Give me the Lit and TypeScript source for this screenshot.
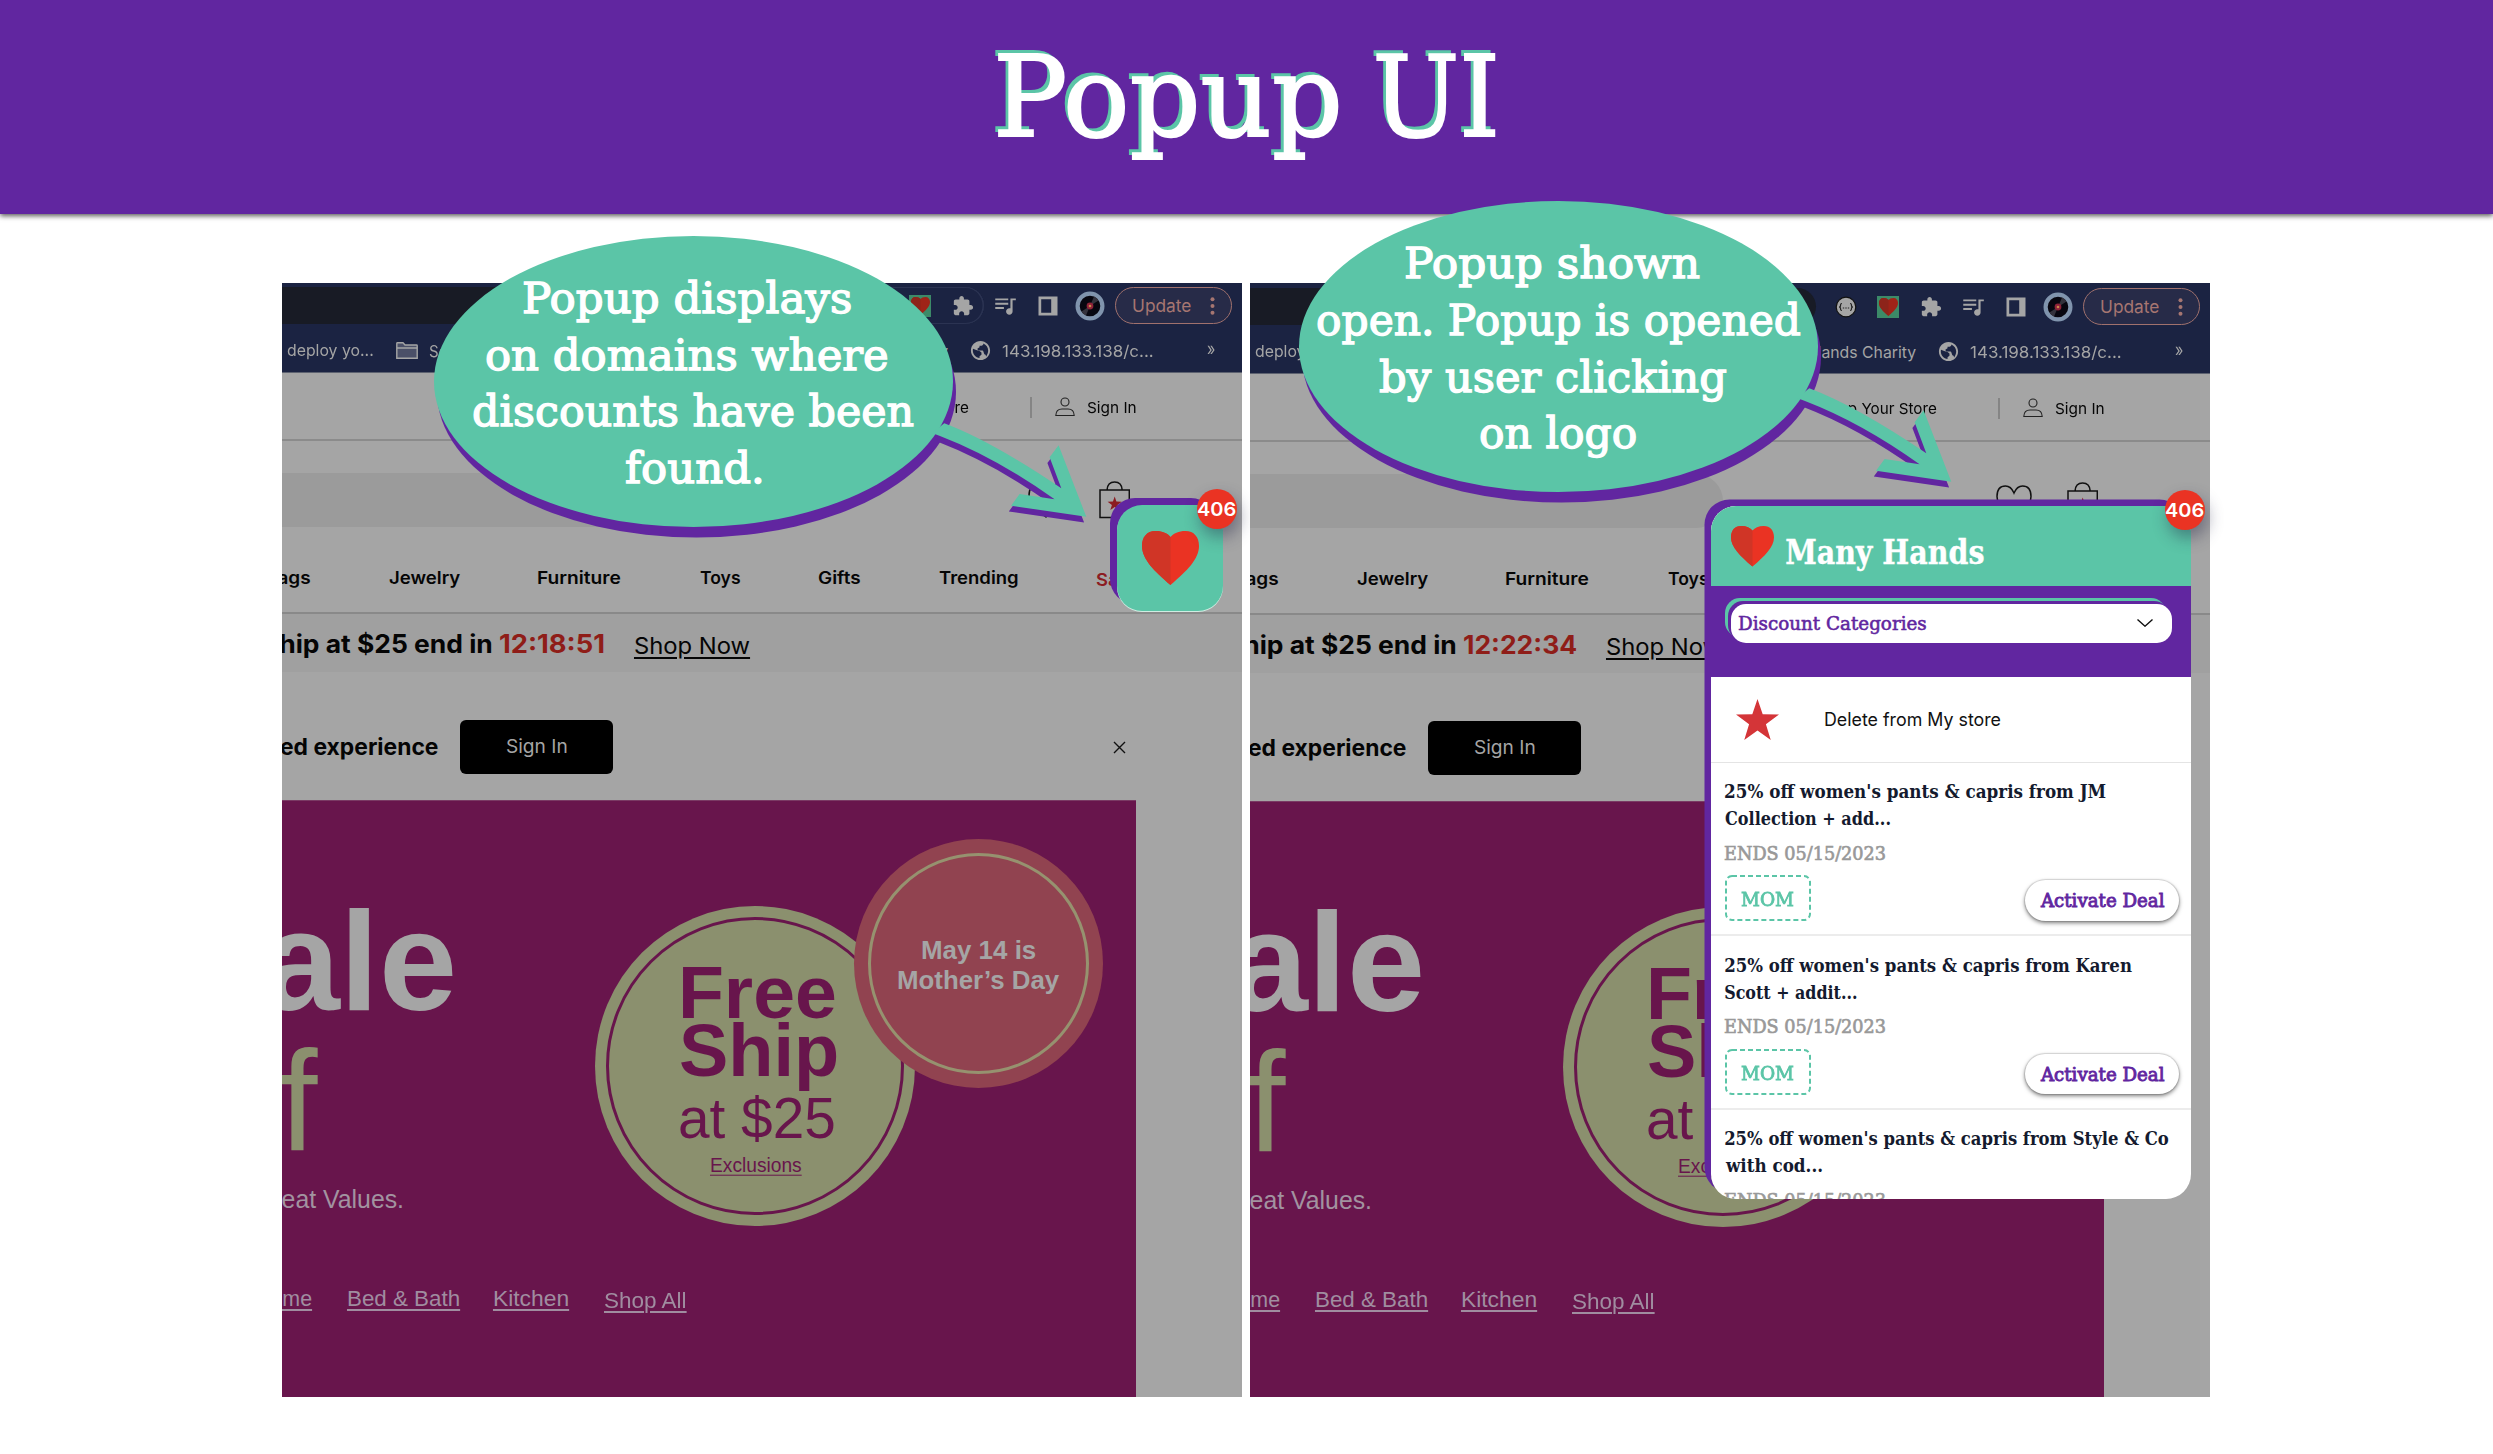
import { LitElement, html, css } from "lit";
import { customElement, property } from "lit/decorators.js";
import { classMap } from "lit/directives/class-map.js";
import { styleMap } from "lit/directives/style-map.js";

const FACES: Record<string, string> = {
  slab: '"Roboto Slab", "DejaVu Serif", serif',
  ui: 'Inter, "Liberation Sans", sans-serif',
  sans: '"Liberation Sans", Arial, sans-serif',
};

const pen = document.createElement("canvas").getContext("2d")!;

/** A single line of text sized by cap height and ink width; its box runs from cap line to baseline. */
@customElement("fit-text")
class FitText extends LitElement {
  @property() text = "";
  @property() face = "ui";
  @property({ type: Number }) cap = 12;
  @property({ type: Number }) w = 0;
  @property({ type: Number }) weight = 400;
  @property({ type: Boolean }) underline = false;

  static styles = css`
    :host { display: inline-block; flex: none; }
    .box { display: block; }
    .run { display: block; width: max-content; white-space: pre; transform-origin: 0 0; }
    .under { text-decoration: underline; text-decoration-thickness: 0.07em; text-underline-offset: 0.14em; }
  `;

  render() {
    const family = FACES[this.face];
    pen.font = `${this.weight} 200px ${family}`;
    const size = (this.cap / pen.measureText("H").actualBoundingBoxAscent) * 200;
    pen.font = `${this.weight} ${size}px ${family}`;
    const m = pen.measureText(this.text);
    const ink = m.actualBoundingBoxLeft + m.actualBoundingBoxRight;
    const sx = this.w ? this.w / ink : 1;
    const asc = Math.round(m.fontBoundingBoxAscent);
    const desc = Math.round(m.fontBoundingBoxDescent);
    const dy = this.cap / 2 - (asc - desc) / 2;
    const dx = m.actualBoundingBoxLeft * sx;
    return html`<span class="box" style=${styleMap({ width: `${this.w || ink}px`, height: `${this.cap}px` })}
      ><span
        class=${classMap({ run: true, under: this.underline })}
        style=${styleMap({
          font: `${this.weight} ${size}px/${this.cap}px ${family}`,
          transform: `translate(${dx}px, ${dy}px) scaleX(${sx})`,
        })}
        >${this.text}</span
      ></span
    >`;
  }
}

const t = (text: string, face: string, cap: number, w: number, weight = 400, underline = false) =>
  html`<fit-text .text=${text} .face=${face} .cap=${cap} .w=${w} .weight=${weight} .underline=${underline}></fit-text>`;

const heart = (cls: string) => html`<svg class=${cls} viewBox="0 0 57 54" preserveAspectRatio="none">
  <path fill="#ea3323" d="M28.500 54C12 40 0 28 0 15 0 6 5 0 13.500 0 20.500 0 25.500 2.500 28.500 6 31.500 2.500 36.500 0 43.500 0 52 0 57 6 57 15 57 28 45 40 28.500 54Z" />
  <path fill="#d03526" d="M28.500 54C12 40 0 28 0 15 0 6 5 0 13.500 0 20.500 0 25.500 2.500 28.500 6Z" />
</svg>`;

const STAR = "M12 0 14.900 8.600 24 8.700 16.700 14.200 19.400 23 12 17.700 4.600 23 7.300 14.200 0 8.700 9.100 8.600Z";

@customElement("count-badge")
class CountBadge extends LitElement {
  @property({ type: Number }) count = 0;
  static styles = css`
    :host {
      display: flex; align-items: center; justify-content: center;
      width: 40px; height: 40px; border-radius: 50%;
      background: #ea3323; color: #fff; box-shadow: 3px 8px 16px rgba(35, 35, 70, 0.42);
    }
  `;
  render() {
    return t(String(this.count), "ui", 14, 38, 600);
  }
}

@customElement("speech-callout")
class SpeechCallout extends LitElement {
  @property({ attribute: false }) lines: { text: string; w: number; trail?: boolean }[] = [];
  static styles = css`
    :host {
      display: flex; flex-direction: column; align-items: center; gap: 24.700px;
      box-sizing: border-box; width: 519px; height: 291px; padding-top: 45px;
      border-radius: 50%; background: #5bc5a7; color: #fff; box-shadow: 3px 10.500px 0 #6126a0;
      -webkit-text-stroke: 1.400px #fff;
    }
    .trail { margin-right: 12px; }
    .line { display: flex; }
    .arrow { position: absolute; left: 0; top: 0; width: 519px; height: 291px; overflow: visible; }
  `;
  render() {
    return html`
      <svg class="arrow" viewBox="0 0 519 291">
        <path fill="#6126a0" transform="translate(-2.200 5.800)" d="M506 193Q557 204.800 627.300 252.300L615.600 221.300 624.600 209.300 652.300 280.800 577 269.700 585.600 258 620.600 263.300Q562 221.500 506 200Z" />
        <path fill="#5bc5a7" d="M510.300 187.300Q557 204.800 627.300 252.300L615.600 221.300 624.600 209.300 652.300 280.800 577 269.700 585.600 258 620.600 263.300Q562 221.500 506 200L498 197Z" />
      </svg>
      ${this.lines.map(
        (l) => html`<div class=${classMap({ line: true, trail: !!l.trail })}>${t(l.text, "slab", 32, l.w, 400)}</div>`
      )}
    `;
  }
}

@customElement("shop-page")
class ShopPage extends LitElement {
  @property() timer = "";
  @property({ type: Number }) timerWidth = 104;
  @property({ type: Number }) shipEnd = 210;
  @property({ type: Boolean }) grouped = false;
  @property({ type: Boolean }) lowered = false;

  static styles = css`
    :host { display: flex; flex-direction: column; width: 960px; height: 1114px; overflow: hidden; background: #a5a5a5; color: #050505; }
    .toolbar { display: flex; flex: none; height: 37px; padding: 4px 10.300px 0 0; background: #1b2342; color: #a5a5a5; }
    .lowered { padding-top: 5px; }
    .address { width: 566px; flex: none; background: #181b25; border-radius: 0 18.500px 18.500px 0; }
    .exts { display: flex; box-sizing: border-box; margin-left: 8.500px; }
    .grouped { border-radius: 18.500px; box-shadow: inset -1.500px 0 0 #2b3352, inset 0 -1px 0 #2b3352, inset 0 1px 0 #2b3352; }
    .cell { display: flex; width: 42.500px; align-items: center; justify-content: center; }
    .update {
      display: flex; box-sizing: border-box; width: 117px; margin-left: 3.300px; padding: 0 16px 0 17px; align-items: center; justify-content: space-between;
      border: 1.500px solid #a0716d; border-radius: 19px; background: #272b48; color: #a67671;
    }
    .fav { display: flex; width: 22px; height: 22px; align-items: center; justify-content: center; background: #3c8a68; }
    .favheart { width: 19px; height: 18px; filter: brightness(0.680); }
    .i22 { width: 22px; height: 22px; }
    .i26 { width: 26px; height: 26px; }
    .i29 { width: 30px; height: 30px; }
    .bookmarks { display: flex; flex: none; box-sizing: border-box; height: 49px; align-items: center; padding-top: 5px; background: #1b2342; border-bottom: 1.500px solid #5d6270; color: #a5a5a5; }
    .cutmark { margin-left: -14px; }
    .folder { width: 22px; height: 17px; margin: 0 11px 0 22.500px; flex: none; }
    .spring { flex: 1; }
    .globe { width: 23px; height: 23px; margin: 0 10px 0 21px; }
    .more { margin: 0 27px 1px 54px; }
    .utility { display: flex; flex: none; box-sizing: border-box; height: 68px; align-items: center; padding: 2px 106.700px 0 0; justify-content: flex-end; border-bottom: 2px solid #8b8b8b; }
    .rule { width: 2px; height: 21px; margin: 0 22.500px 0 61px; background: #858585; }
    .user { width: 20px; height: 20px; margin-right: 12px; }
    .search { display: flex; flex: none; height: 93px; }
    .field { width: 472.700px; height: 54px; margin-top: 32px; background: #9b9b9b; border-radius: 0 27px 27px 0; }
    .fav-icon { width: 36px; height: 34px; margin: 43px 35px 0 273px; flex: none; }
    .bag { width: 31px; height: 38px; margin-top: 40px; flex: none; }
    .nav { display: flex; flex: none; box-sizing: border-box; height: 80px; gap: 78.700px; padding-top: 38px; border-bottom: 2px solid #898989; }
    .nav > fit-text:first-child { margin-left: -64px; }
    .sale { color: #8c1c22; }
    .promo { display: flex; flex: none; box-sizing: border-box; height: 58px; padding-top: 20.500px; align-items: flex-start; background: #a0a0a0; }
    .clock { margin: 0 30.500px 0 8px; color: #8f1d18; }
    .shop { padding-top: 2px; }
    .signin { display: flex; flex: none; height: 128px; box-sizing: border-box; padding: 0 116px 23px 0; align-items: flex-end; }
    .join { display: flex; flex: 1; height: 60px; align-items: center; }
    .join > fit-text { margin-left: -2.500px; }
    .btn { display: flex; width: 153.500px; height: 53.500px; margin-left: 22px; align-items: center; justify-content: center; border-radius: 6px; background: #000; color: #a5a5a5; }
    .close { width: 13px; height: 13px; margin-left: auto; }
    .banner { position: relative; display: flex; flex-direction: column; box-sizing: border-box; width: 854px; height: 597px; padding-top: 112.500px; background: #68154c; color: #a5a5a5; box-shadow: inset 0 1px 0 #7a3a64; overflow: hidden; }
    .big { height: 97.500px; margin-left: -110px; }
    .off { height: 98px; margin: 42.700px 0 0 -110px; color: #8b906e; }
    .values { height: 17.500px; margin: 40px 0 0 -27px; color: #a293a0; }
    .links { display: flex; height: 15px; margin: 83.300px 0 0 -26px; gap: 35.500px; color: #a08da0; }
    .last { margin-top: 2px; }
    .disc { position: absolute; display: flex; flex-direction: column; align-items: center; box-sizing: border-box; border-radius: 50%; }
    .ship { left: 313px; top: 106px; width: 320px; height: 320px; padding: 61px 0 0 7px; background: #8b906e; color: #68154c; }
    .ship::after { content: ""; position: absolute; inset: 11px; border: 3.500px solid #68154c; border-radius: 50%; }
    .free { height: 51px; }
    .shp { height: 52.600px; margin-top: 7.400px; }
    .at { height: 39.500px; margin: 21.500px 3px 0 0; }
    .excl { height: 13.400px; margin: 18.600px 6px 0 0; }
    .may { left: 572px; top: 38.500px; width: 249px; height: 249px; padding-top: 103px; gap: 12.700px; background: #914350; }
    .may::after { content: ""; position: absolute; inset: 14px; border: 3.500px solid #96926f; border-radius: 50%; }
  `;

  render() {
    return html`
      <div class=${classMap({ toolbar: true, lowered: this.lowered })}>
        <div class="address"></div>
        <div class=${classMap({ exts: true, grouped: this.grouped })}>
          <div class="cell">
            <svg class="i22" viewBox="0 0 22 22">
              <circle cx="11" cy="11" r="9.800" fill="#a5a5a5" stroke="#111" stroke-width="1.200" />
              <path fill="none" stroke="#222" stroke-width="1.200" d="M7 7.500Q5.500 7.500 5.500 9V10Q5.500 11 4 11 5.500 11 5.500 12V13Q5.500 14.500 7 14.500M15 7.500Q16.500 7.500 16.500 9V10Q16.500 11 18 11 16.500 11 16.500 12V13Q16.500 14.500 15 14.500M7.800 12h1.400M10.300 12h1.400M12.800 12h1.400" />
            </svg>
          </div>
          <div class="cell"><div class="fav">${heart("favheart")}</div></div>
          <div class="cell">
            <svg class="i22" viewBox="0 0 24 24" fill="#a5a5a5">
              <path d="M20.500 11H19V7c0-1.100-.9-2-2-2h-4V3.500C13 2.120 11.880 1 10.500 1S8 2.120 8 3.500V5H4c-1.100 0-1.990.9-1.990 2v3.800H3.500c1.490 0 2.700 1.210 2.700 2.700s-1.210 2.700-2.700 2.700H2V20c0 1.100.9 2 2 2h3.800v-1.500c0-1.490 1.210-2.700 2.700-2.700 1.490 0 2.700 1.210 2.700 2.700V22H17c1.100 0 2-.9 2-2v-4h1.500c1.380 0 2.500-1.120 2.500-2.500S21.880 11 20.500 11z" />
            </svg>
          </div>
        </div>
        <div class="cell">
          <svg class="i26" viewBox="0 0 24 24" fill="#a5a5a5">
            <path d="M15 5H3v1.800h12V5zm0 4H3v1.800h12V9zM3 14.800h8V13H3v1.800zM17 5v9.180c-.31-.11-.65-.18-1-.18-1.660 0-3 1.340-3 3s1.340 3 3 3 3-1.340 3-3V6.800h3V5h-5z" />
          </svg>
        </div>
        <div class="cell">
          <svg class="i22" viewBox="0 0 22 22">
            <path fill="#a5a5a5" fill-rule="evenodd" d="M1.500 1.500h19v19h-19ZM4.200 4.200v13.600h10V4.200Z" />
          </svg>
        </div>
        <div class="cell">
          <svg class="i29" viewBox="0 0 30 30">
            <circle cx="15" cy="15" r="12.400" fill="#07060f" stroke="#8094ad" stroke-width="4.200" />
            <path fill="#34323c" d="M15 15 19 5.600A10 10 0 0 1 23.500 9.500ZM15 15 11 24.400A10 10 0 0 1 6.500 20.500Z" />
            <circle cx="15" cy="15" r="3.400" fill="#8e2238" /><circle cx="15" cy="15" r="1.300" fill="#c98a4a" />
          </svg>
        </div>
        <div class="update">
          ${t("Update", "ui", 13, 58, 400)}
          <svg width="5" height="18" viewBox="0 0 5 18" fill="#a67671">
            <circle cx="2.500" cy="2.200" r="2" /><circle cx="2.500" cy="9" r="2" /><circle cx="2.500" cy="15.800" r="2" />
          </svg>
        </div>
      </div>
      <div class="bookmarks">
        <div class="cutmark">${t("to deploy yo...", "ui", 12, 105, 400)}</div>
        <svg class="folder" viewBox="0 0 22 17" fill="#4b5068" stroke="#a5a5a5" stroke-width="1.400">
          <path d="M.8 16.200V1.500Q.8.800 1.500.8H7l2 2.200h11.500q.7 0 .7.700v12.500ZM.8 6h20.400" />
        </svg>
        ${t("Social", "ui", 12, 42, 400)}
        <span class="spring"></span>
        ${t("Many Hands Charity", "ui", 12, 151, 400)}
        <svg class="globe" viewBox="0 0 24 24" fill="#a5a5a5">
          <path d="M12 2C6.480 2 2 6.480 2 12s4.480 10 10 10 10-4.480 10-10S17.520 2 12 2zm-1 17.930c-3.950-.49-7-3.850-7-7.930 0-.62.080-1.210.21-1.790L7.500 11.500l3.500 1 2 1.500v2.500l-2 1.500v1.930zm6.900-1.540c-.26-.81-.4-2.390-1.900-2.390l-1-3c-.2-.7-.45-1-1-1H10l-1.500-1.500L10 9c.55 0 1-.45 1-1V7h2c1.100 0 2-.9 2-2v-.41c2.930 1.190 5 4.060 5 7.410 0 2.080-.8 3.970-2.100 6.390z" />
        </svg>
        ${t("143.198.133.138/c...", "ui", 12, 151, 400)}
        <span class="more">${t("»", "ui", 13, 8, 400)}</span>
      </div>
      <div class="utility">
        ${t("Shop Your Store", "ui", 11, 117, 400)}
        <span class="rule"></span>
        <svg class="user" viewBox="0 0 20 20" fill="none" stroke="#222" stroke-width="1.100">
          <circle cx="10" cy="5" r="4" /><path d="M.8 18.500Q1 12 7 12h6q6 0 6.200 6.500Z" />
        </svg>
        ${t("Sign In", "ui", 11, 48.7, 400)}
      </div>
      <div class="search">
        <div class="field"></div>
        <svg class="fav-icon" viewBox="0 0 36 34" fill="none" stroke="#111" stroke-width="1.500">
          <path d="M18 8Q15 1 9.500 1 1 1 1 11.500 1 21 18 33 35 21 35 11.500 35 1 26.500 1 21 1 18 8Z" />
        </svg>
        <svg class="bag" viewBox="0 0 31 38" fill="none" stroke="#111" stroke-width="1.500">
          <path d="M1 9h29.300v27.500H1ZM8 9Q8.500 1 15.600 1T23.200 9" />
          <path transform="translate(8.600 15.500) scale(.59)" fill="#8c1c22" stroke="none" d=${STAR} />
        </svg>
      </div>
      <div class="nav">
        ${t("Handbags", "ui", 12.7, 92, 600)}${t("Jewelry", "ui", 12.7, 71, 600)}${t("Furniture", "ui", 12.7, 82.6, 600)}
        ${t("Toys", "ui", 12.7, 40, 600)}${t("Gifts", "ui", 12.7, 42, 600)}${t("Trending", "ui", 12.7, 78.7, 600)}
        <span class="sale">${t("Sale", "ui", 12.7, 38, 600)}</span>
      </div>
      <div class="promo">
        <span style=${styleMap({ marginLeft: `${this.shipEnd - 229}px` })}>${t("Ship at $25 end in", "ui", 18.5, 229, 650)}</span>
        <span class="clock">${t(this.timer, "ui", 18.5, this.timerWidth, 650)}</span>
        <span class="shop">${t("Shop Now", "ui", 17, 115, 400, true)}</span>
      </div>
      <div class="signin">
        <div class="join">
          ${t("ed experience", "ui", 16.5, 158, 700)}
          <div class="btn">${t("Sign In", "ui", 13.8, 59.5, 400)}</div>
          <svg class="close" viewBox="0 0 13 13" stroke="#111" stroke-width="1.400"><path d="M1 1 12 12M12 1 1 12" /></svg>
        </div>
      </div>
      <div class="banner">
        <div class="big">${t("Sale", "sans", 97.5, 281, 700)}</div>
        <div class="off">${t("off", "sans", 98, 146, 400)}</div>
        <div class="values">${t("Great Values.", "sans", 17.5, 147, 400)}</div>
        <div class="links">
          ${t("Home", "sans", 15, 56, 400, true)}${t("Bed & Bath", "sans", 15, 111, 400, true)}${t("Kitchen", "sans", 15, 74, 400, true)}
          <span class="last">${t("Shop All", "sans", 15, 83, 400, true)}</span>
        </div>
        <div class="disc ship">
          <div class="free">${t("Free", "sans", 51, 153, 700)}</div>
          <div class="shp">${t("Ship", "sans", 51.5, 156, 700)}</div>
          <div class="at">${t("at $25", "sans", 39.5, 154, 400)}</div>
          <div class="excl">${t("Exclusions", "sans", 13.4, 90, 400, true)}</div>
        </div>
        <div class="disc may">${t("May 14 is", "sans", 17.8, 114, 700)}${t("Mother’s Day", "sans", 17.8, 162, 700)}</div>
      </div>
    `;
  }
}

interface Deal { lines: [string, number][]; ends: string; code: string; }

const DEALS: Deal[] = [
  { lines: [["25% off women's pants & capris from JM", 381], ["Collection + add...", 165.5]], ends: "ENDS 05/15/2023", code: "MOM" },
  { lines: [["25% off women's pants & capris from Karen", 407], ["Scott + addit...", 132]], ends: "ENDS 05/15/2023", code: "MOM" },
  { lines: [["25% off women's pants & capris from Style & Co", 444], ["with cod...", 97.5]], ends: "ENDS 05/15/2023", code: "MOM" },
];

@customElement("deal-popup")
class DealPopup extends LitElement {
  static styles = css`
    :host { display: block; width: 480px; height: 693px; }
    .card { display: flex; flex-direction: column; height: 693px; overflow: hidden; border-radius: 25px; background: #fff; }
    .frame { border-radius: 25px; box-shadow: -6.500px -6.500px 0 #6126a0; }
    .head { display: flex; flex: none; box-sizing: border-box; height: 80px; padding: 20px 20px 0; background: #5bc5a7; color: #fff; }
    .logo { width: 43px; height: 40.500px; }
    .name { padding: 14px 0 0 12px; -webkit-text-stroke: 0.400px #fff; }
    .filter { flex: none; box-sizing: border-box; height: 91px; padding: 17.500px 19.300px; background: #6126a0; }
    .select {
      display: flex; box-sizing: border-box; height: 39.500px; padding: 0 19px 0 8px; align-items: center; justify-content: space-between;
      border-radius: 15px; background: #fff; color: #6126a0; box-shadow: -3px -3px 0 #6126a0, -6px -6px 0 #5bc5a7; -webkit-text-stroke: 0.600px #6126a0;
    }
    .store { display: flex; flex: none; box-sizing: border-box; height: 85.500px; padding-left: 25px; align-items: center; border-bottom: 1px solid #e4e4e4; color: #111; }
    .star { width: 43px; height: 41px; margin-right: 46px; }
    .deal { display: flex; flex: none; flex-direction: column; box-sizing: border-box; height: 173.500px; padding: 20.500px 12px 0 14px; border-bottom: 2px solid #ececec; color: #141a2e; }
    .line { height: 14px; margin-bottom: 13px; }
    .ends { height: 14px; margin: 8.500px 0 15.500px; color: #999; -webkit-text-stroke: 0.700px #999; }
    .foot { display: flex; justify-content: space-between; }
    .dash { display: grid; place-items: center; width: 86px; height: 46px; color: #5bc5a7; -webkit-text-stroke: 0.800px #5bc5a7; }
    .dash > * { grid-area: 1 / 1; }
    .dash > fit-text { margin: 2px 2px 0 0; }
    .go {
      display: flex; width: 154px; height: 40.500px; margin-top: 5px; align-items: center; justify-content: center; border-radius: 21px;
      background: #fff; color: #6126a0; box-shadow: 0 2px 4px rgba(0, 0, 0, 0.500), 0 0 1px 1px rgba(0, 0, 0, 0.120); -webkit-text-stroke: 0.900px #6126a0;
    }
  `;
  render() {
    return html`<div class="frame">
      <div class="card">
        <div class="head">${heart("logo")}<div class="name">${t("Many Hands", "slab", 24, 198, 700)}</div></div>
        <div class="filter">
          <div class="select">
            ${t("Discount Categories", "slab", 14, 187, 400)}
            <svg width="16" height="8" viewBox="0 0 16 8" fill="none" stroke="#111" stroke-width="1.400"><path d="M.5.500 8 7.200 15.500.500" /></svg>
          </div>
        </div>
        <div class="store">
          <svg class="star" viewBox="0 0 24 23" preserveAspectRatio="none"><path fill="#d43538" d=${STAR} /></svg>
          ${t("Delete from My store", "ui", 13.3, 175.4, 400)}
        </div>
        ${DEALS.map(
          (d) => html`<div class="deal">
            ${d.lines.map(([s, w]) => html`<div class="line">${t(s, "slab", 14, w, 700)}</div>`)}
            <div class="ends">${t(d.ends, "slab", 14, 160, 400)}</div>
            <div class="foot">
              <div class="dash">
                <svg width="86" height="46" viewBox="0 0 86 46">
                  <rect x="1" y="1" width="84" height="44" rx="6" fill="none" stroke="#5bc5a7" stroke-width="2" stroke-dasharray="5 3" />
                </svg>
                ${t(d.code, "slab", 14, 52.5, 400)}
              </div>
              <div class="go">${t("Activate Deal", "slab", 14, 124.4, 400)}</div>
            </div>
          </div>`
        )}
      </div>
    </div>`;
  }
}

@customElement("app-root")
class AppRoot extends LitElement {
  static styles = css`
    :host { display: block; width: 2493px; height: 1454px; overflow: hidden; background: #fff; }
    .bar { display: flex; box-sizing: border-box; height: 214px; padding-top: 53.700px; gap: 39px; justify-content: center; background: #6126a0; color: #fff; -webkit-text-stroke: 2px; text-shadow: -4px -4px 0 #5bc5a7; box-shadow: 0 2px 5px rgba(0, 0, 0, 0.650); }
    .stage { display: flex; gap: 8px; padding: 69px 0 0 282px; }
    .slot { position: relative; }
    .call-a { position: absolute; left: 151.700px; top: -47px; z-index: 2; }
    .call-b { position: absolute; left: 49.300px; top: -81.700px; z-index: 2; }
    .tile { position: absolute; left: 835px; top: 222px; display: flex; width: 106px; height: 106px; align-items: center; justify-content: center; border-radius: 25px; background: #5bc5a7; box-shadow: 0 1px 0 #cfeee3, -7px -7px 0 #6126a0; }
    .tileheart { width: 57px; height: 54px; }
    .badge-a { position: absolute; left: 914.500px; top: 205.700px; }
    .popup { position: absolute; left: 461.300px; top: 223px; }
    .badge-b { position: absolute; left: 914.500px; top: 207px; }
  `;
  render() {
    return html`
      <header class="bar">${t("Popup", "slab", 82.5, 339, 400)}${t("UI", "slab", 82.5, 118, 400)}</header>
      <main class="stage">
        <section class="slot">
          <shop-page timer="12:18:51" .timerWidth=${104} .shipEnd=${210} grouped></shop-page>
          <speech-callout
            class="call-a"
            .lines=${[
              { text: "Popup displays", w: 327, trail: true },
              { text: "on domains where", w: 400, trail: true },
              { text: "discounts have been", w: 439 },
              { text: "found.", w: 135 },
            ]}
          ></speech-callout>
          <div class="tile">${heart("tileheart")}</div>
          <count-badge class="badge-a" .count=${406}></count-badge>
        </section>
        <section class="slot">
          <shop-page timer="12:22:34" .timerWidth=${112} .shipEnd=${206} lowered></shop-page>
          <speech-callout
            class="call-b"
            .lines=${[
              { text: "Popup shown", w: 293, trail: true },
              { text: "open. Popup is opened", w: 482 },
              { text: "by user clicking", w: 346, trail: true },
              { text: "on logo", w: 155 },
            ]}
          ></speech-callout>
          <deal-popup class="popup"></deal-popup>
          <count-badge class="badge-b" .count=${406}></count-badge>
        </section>
      </main>
    `;
  }
}
